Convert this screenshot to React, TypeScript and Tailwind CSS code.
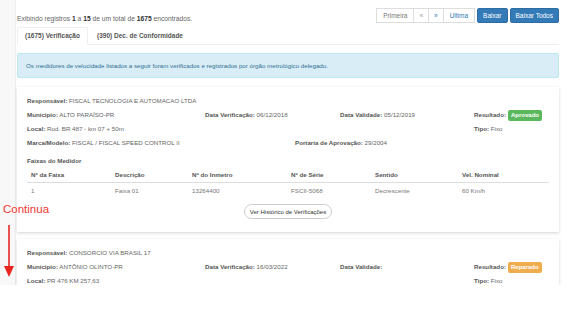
import React from "react";

const COLS = ["w-[84px]", "w-[77px]", "w-[99px]", "w-[84px]", "w-[87px]", "flex-1"];

const HEAD = ["Nº da Faixa", "Descrição", "Nº do Inmetro", "Nº de Série", "Sentido", "Vel. Nominal"];
const ROW = ["1", "Faixa 01", "13264400", "FSCII-5068", "Decrescente", "60 Km/h"];

function Field({ label, value }: { label: string; value?: string }) {
  return (
    <span className="whitespace-nowrap">
      <b className="font-bold text-[#555]">{label}:</b>
      {value ? <span className="text-[#666]"> {value}</span> : null}
    </span>
  );
}

function Badge({ text, color }: { text: string; color: string }) {
  return (
    <span
      className={`ml-[2px] inline-flex h-[11px] items-center rounded-[2px] px-[3px] text-[6px] font-bold leading-none text-white ${color}`}
    >
      {text}
    </span>
  );
}

type Item = {
  resp: string;
  mun: string;
  dataVer: string;
  dataVal: string;
  local: string;
  resultado: string;
  badge: string;
  marca?: string;
  portaria?: string;
  full?: boolean;
};

function Card({ item }: { item: Item }) {
  return (
    <div className="bg-white px-[10px] pt-[7px] pb-[13px] text-[6.2px] shadow-[0_1px_3px_rgba(0,0,0,0.18)]">
      <div className="flex leading-[14px]">
        <div className="w-[447px]">
          <div>
            <Field label="Responsável" value={item.resp} />
          </div>
          <div className="flex">
            <div className="w-[178px]">
              <Field label="Município" value={item.mun} />
            </div>
            <div className="w-[135px]">
              <Field label="Data Verificação" value={item.dataVer} />
            </div>
            <div>
              <Field label="Data Validade" value={item.dataVal} />
            </div>
          </div>
          <div>
            <Field label="Local" value={item.local} />
          </div>
          {item.marca && (
            <div className="flex">
              <div className="w-[268px]">
                <Field label="Marca/Modelo" value={item.marca} />
              </div>
              <div>
                <Field label="Portaria de Aprovação" value={item.portaria} />
              </div>
            </div>
          )}
        </div>
        <div className="pt-[14px]">
          <div className="flex h-[14px] items-center">
            <b className="font-bold text-[#555]">Resultado:</b>
            <Badge text={item.resultado} color={item.badge} />
          </div>
          <div>
            <Field label="Tipo" value="Fixo" />
          </div>
        </div>
      </div>

      {item.full && (
        <>
          <div className="mt-[4px] leading-[14px] font-bold text-[#555]">Faixas do Medidor</div>
          <div className="flex h-[15px] items-center border-b border-[#ddd] font-bold text-[#555]">
            {HEAD.map((h, i) => (
              <div key={h} className={`${COLS[i]} pl-[4px]`}>
                {h}
              </div>
            ))}
          </div>
          <div className="flex h-[16px] items-center text-[#777]">
            {ROW.map((c, i) => (
              <div key={i} className={`${COLS[i]} pl-[4px]`}>
                {c}
              </div>
            ))}
          </div>
          <div className="mt-[5px] flex justify-center">
            <button className="h-[15px] rounded-full border border-[#ccc] bg-white px-[5px] text-[6px] leading-none text-[#333]">
              Ver Histórico de Verificações
            </button>
          </div>
        </>
      )}
    </div>
  );
}

export default function App() {
  const first: Item = {
    resp: "FISCAL TECNOLOGIA E AUTOMACAO LTDA",
    mun: "ALTO PARAÍSO-PR",
    dataVer: "06/12/2018",
    dataVal: "05/12/2019",
    local: "Rod. BR 487 - km 07 + 50m",
    resultado: "Aprovado",
    badge: "bg-[#5cb85c]",
    marca: "FISCAL / FISCAL SPEED CONTROL II",
    portaria: "29/2004",
    full: true,
  };
  const second: Item = {
    resp: "CONSORCIO VIA BRASIL 17",
    mun: "ANTÔNIO OLINTO-PR",
    dataVer: "16/03/2022",
    dataVal: "",
    local: "PR 476 KM 257,63",
    resultado: "Reparado",
    badge: "bg-[#f0ad4e]",
  };

  return (
    <div className="relative h-[320px] w-[573px] overflow-hidden bg-white font-['Liberation_Sans',Arial,sans-serif] text-[6.5px] text-[#666]">
      <div className="flex h-[285px] overflow-hidden">
        <div className="w-[16px] shrink-0 border-r border-[#eee] bg-[#f8f8f8]" />
        <main className="w-[543px] shrink-0 pl-[1px]">
          <div className="flex items-start justify-between pt-[8px]">
            <p className="pt-[7px] text-[6.7px] leading-[8px] text-[#666]">
              Exibindo registros <b className="text-[#333]">1</b> a <b className="text-[#333]">15</b> de um total de{" "}
              <b className="text-[#333]">1675</b> encontrados.
            </p>
            <div className="flex items-center">
              <div className="flex h-[15px] border border-[#ddd] text-[6.5px]">
                <span className="flex items-center border-r border-[#ddd] px-[6px] text-[#777]">Primeira</span>
                <span className="flex items-center border-r border-[#ddd] px-[5px] text-[#999]">«</span>
                <span className="flex items-center border-r border-[#ddd] px-[5px] text-[#337ab7]">»</span>
                <span className="flex items-center px-[6px] text-[#337ab7]">Ultima</span>
              </div>
              <button className="ml-[2px] h-[15px] rounded-[2px] border border-[#2e6da4] bg-[#337ab7] px-[5px] text-[6.5px] text-white">
                Baixar
              </button>
              <button className="ml-[2px] h-[15px] rounded-[2px] border border-[#2e6da4] bg-[#337ab7] px-[5px] text-[6.5px] text-white">
                Baixar Todos
              </button>
            </div>
          </div>

          <div className="mt-[4px] flex h-[18px] border-b border-[#eee]">
            <div className="-mb-[1px] flex w-[71px] items-center justify-center rounded-t-[2px] border border-b-white border-[#eee] bg-white font-bold text-[#555]">
              (1675) Verificação
            </div>
            <div className="flex items-center pl-[9px] font-bold text-[#555]">(390) Dec. de Conformidade</div>
          </div>

          <div className="mt-[8px] flex h-[25px] items-center rounded-[2px] border border-[#bce8f1] bg-[#d9edf7] pl-[8px] text-[6.2px] text-[#31708f]">
            Os medidores de velocidade listados a seguir foram verificados e registrados por órgão metrológico delegado.
          </div>

          <div className="mt-[9px]">
            <Card item={first} />
          </div>
          <div className="mt-[7px]">
            <Card item={second} />
          </div>
        </main>
      </div>

      <div className="absolute left-[3px] top-[204px] text-[11.5px] leading-none text-[#f2382f]">Continua</div>
      <svg className="absolute left-[3px] top-[225px]" width="12" height="56" viewBox="0 0 12 56">
        <line x1="6" y1="0" x2="6" y2="43" stroke="#e8261e" strokeWidth="1.6" />
        <polygon points="1,41 11,41 6,52" fill="#e8261e" />
      </svg>
    </div>
  );
}
